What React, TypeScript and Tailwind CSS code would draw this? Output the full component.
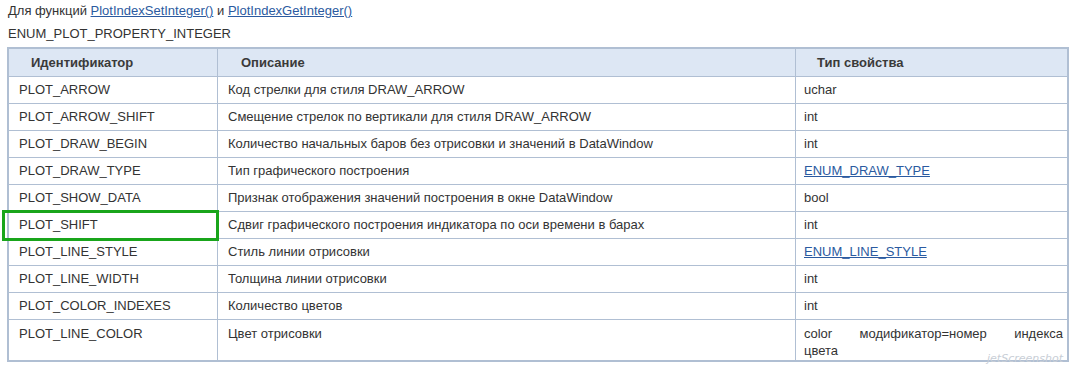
import React from 'react';

type Row = { id: string; desc: string; type: string; link?: boolean };

const rows: Row[] = [
  { id: 'PLOT_ARROW', desc: 'Код стрелки для стиля DRAW_ARROW', type: 'uchar' },
  { id: 'PLOT_ARROW_SHIFT', desc: 'Смещение стрелок по вертикали для стиля DRAW_ARROW', type: 'int' },
  { id: 'PLOT_DRAW_BEGIN', desc: 'Количество начальных баров без отрисовки и значений в DataWindow', type: 'int' },
  { id: 'PLOT_DRAW_TYPE', desc: 'Тип графического построения', type: 'ENUM_DRAW_TYPE', link: true },
  { id: 'PLOT_SHOW_DATA', desc: 'Признак отображения значений построения в окне DataWindow', type: 'bool' },
  { id: 'PLOT_SHIFT', desc: 'Сдвиг графического построения индикатора по оси времени в барах', type: 'int' },
  { id: 'PLOT_LINE_STYLE', desc: 'Стиль линии отрисовки', type: 'ENUM_LINE_STYLE', link: true },
  { id: 'PLOT_LINE_WIDTH', desc: 'Толщина линии отрисовки', type: 'int' },
  { id: 'PLOT_COLOR_INDEXES', desc: 'Количество цветов', type: 'int' },
];

export default function App() {
  return (
    <div className="relative w-[1071px] h-[370px] bg-white text-[#333] text-[13px] leading-[16px] font-['Liberation_Sans',Arial,sans-serif] pt-[1px]">
      <div className="pl-[8px] h-[20px] flex items-center">
        Для функций&nbsp;
        <span className="text-[#2b5aa0] underline">PlotIndexSetInteger()</span>
        &nbsp;и&nbsp;
        <span className="text-[#2b5aa0] underline">PlotIndexGetInteger()</span>
      </div>
      <div className="pl-[8px] h-[22px] mt-[2px] flex items-center">ENUM_PLOT_PROPERTY_INTEGER</div>

      <div className="ml-[7px] mt-[2px] w-[1062px] border-2 border-[#b0bfd3]">
        <div className="grid grid-cols-[209px_578px_1fr] bg-[#dde7f4] h-[28px] border-b border-[#b0bfd3]">
          <div className="pl-[22px] flex items-center font-bold text-[#3a3a3a] border-r border-[#b0bfd3]">Идентификатор</div>
          <div className="pl-[23px] flex items-center font-bold text-[#3a3a3a] border-r border-[#b0bfd3]">Описание</div>
          <div className="pl-[21px] flex items-center font-bold text-[#3a3a3a]">Тип свойства</div>
        </div>
        {rows.map((r) => (
          <div key={r.id} className="grid grid-cols-[209px_578px_1fr] h-[27px] border-b border-[#b0bfd3]">
            <div className="pl-[10px] flex items-center border-r border-[#b0bfd3]">{r.id}</div>
            <div className="pl-[10px] flex items-center border-r border-[#b0bfd3]">{r.desc}</div>
            <div className="pl-[8px] flex items-center">
              {r.link ? <span className="text-[#2b5aa0] underline">{r.type}</span> : r.type}
            </div>
          </div>
        ))}
        <div className="grid grid-cols-[209px_578px_1fr] h-[40px]">
          <div className="pl-[10px] pt-[6px] border-r border-[#b0bfd3]">PLOT_LINE_COLOR</div>
          <div className="pl-[10px] pt-[6px] border-r border-[#b0bfd3]">Цвет отрисовки</div>
          <div className="pl-[8px] pr-[4px] pt-[5px] leading-[17px]">
            <div className="text-justify [text-align-last:justify]">color модификатор=номер индекса</div>
            <div>цвета</div>
          </div>
        </div>
      </div>

      {/* highlight around PLOT_SHIFT */}
      <div className="absolute left-[2px] top-[210px] w-[217px] h-[31px] border-[3px] border-[#19a51b]" />
      <div className="absolute right-[8px] top-[351px] text-[11px] italic text-[#c8ced6] font-['DejaVu_Sans',sans-serif]">jetScreenshot</div>
    </div>
  );
}
